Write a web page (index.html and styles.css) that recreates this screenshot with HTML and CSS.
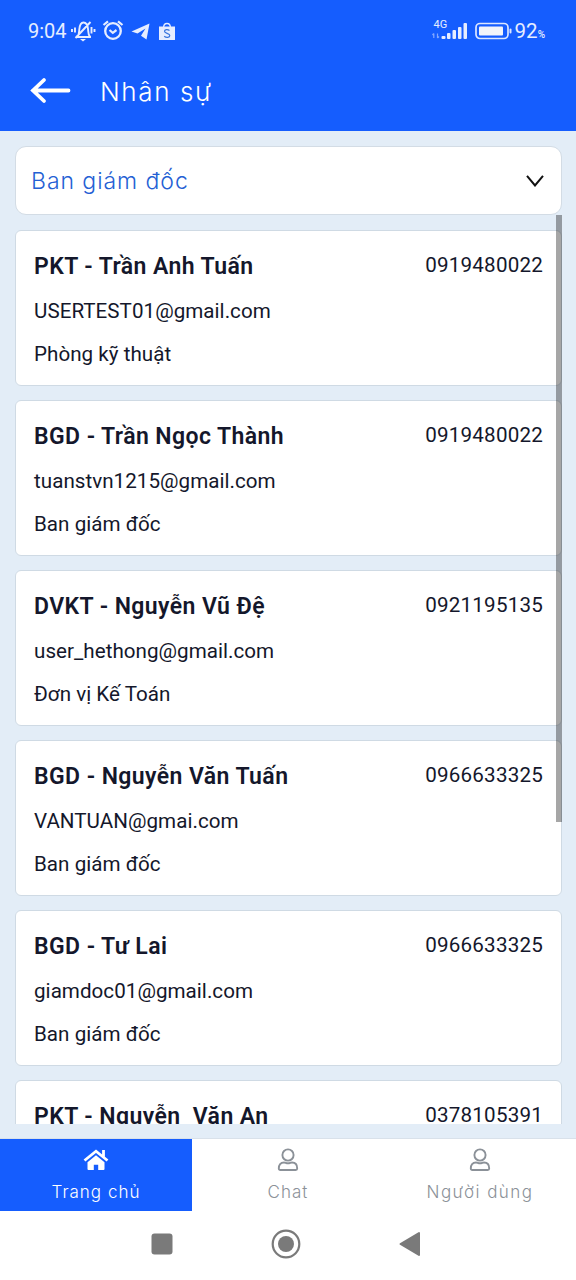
FILE: index.html
```html
<!DOCTYPE html>
<html lang="vi">
<head>
    <meta charset="UTF-8">
    <meta name="viewport" content="width=device-width, initial-scale=1.0">
    <title>Nhân sự</title>
    <link rel="stylesheet" href="styles.css">
</head>
<body>
    <div class="app">
        <header class="header">
            <div class="status">
                <span class="time">9:04</span>
                <svg class="status-left" width="106" height="24" viewBox="0 0 106 24" fill="none" stroke="#e6edff" stroke-width="1.9">
                    <path d="M5 18h15M6.500 17.500c1.800-1.800 1.500-4.500 1.800-7C8.700 6 10 3.500 12.500 3.500s4.200 2.500 4.600 7c.2 2.500 0 5.200 1.800 7M4.500 19 19.500 3M4 8.500v5M1 10v3M20.500 8v6.500M23.500 10v3"/>
                    <path d="M9 20h6l-3 2.500z" fill="#e6edff" stroke="none"/>
                    <circle cx="42" cy="12" r="7.800" stroke-width="2.300"/>
                    <path d="M38.500 11l3.300 2.800 3.700-2.800M32.500 6l4.500-3.700M51.500 6 47 2.300" stroke-width="2.200"/>
                    <path d="M60.500 12.500 78.500 4.500 75.500 20.500 70 16.800 74.500 9.500 66.500 14.500z" fill="#e6edff" stroke="none"/>
                    <path d="M88 7.500h16v13q0 .5-.5.500h-15q-.5 0-.5-.500z" fill="#e6edff" stroke="none"/>
                    <path d="M92.500 9c0-6 7-6 7 0" stroke-width="1.300"/>
                    <path d="M98.500 11.500c-2-1.600-5-1-5 .8 0 2.500 5.300 1.600 5.300 4.200 0 2.200-3.500 2.500-5.600.8" stroke="#3975dd" stroke-width="1.200"/>
                </svg>
                <div class="signal">
                    <span class="net">4G</span>
                    <svg width="36" height="17" viewBox="0 0 36 17" fill="#e6edff">
                        <path d="M1.800 15v-4.500M.5 12l1.300-1.500M5.500 10.500V15M5.500 15l1.500-1.500" fill="none" stroke="#83a8ff" stroke-width="1.200"/>
                        <rect x="9.500" y="13" width="4" height="3" rx="1"/>
                        <rect x="15" y="10" width="3.500" height="6" rx="1"/>
                        <rect x="20.500" y="7" width="3.500" height="9" rx="1"/>
                        <rect x="26" y="4" width="3.500" height="12" rx="1"/>
                        <rect x="31.500" y="0" width="3.500" height="16" rx="1"/>
                    </svg>
                </div>
                <svg class="battery" width="37" height="18" viewBox="0 0 37 18">
                    <rect x="1" y="1.500" width="32" height="15" rx="4" fill="none" stroke="#dbe6ff" stroke-width="1.700"/>
                    <rect x="4" y="4.500" width="24" height="9" rx="1" fill="#f1f4fa"/>
                    <rect x="34.500" y="6.500" width="2" height="5" rx="1" fill="#dbe6ff"/>
                </svg>
                <span class="percent">92<small>%</small></span>
            </div>
            <div class="title-row">
                <svg class="back" width="42" height="28" viewBox="0 0 42 28" fill="none" stroke="#fff" stroke-width="3.800" stroke-linecap="round">
                    <path d="M4 13.500h35.500M15 3 4 13.500 15 24"/>
                </svg>
                <h1 class="title">Nhân sự</h1>
            </div>
        </header>

        <main class="content">
            <div class="select">
                <span class="select-text">Ban giám đốc</span>
                <svg width="18" height="12" viewBox="0 0 18 12" fill="none" stroke="#111" stroke-width="2">
                    <path d="M1 .8 9 10.500 17 .8"/>
                </svg>
            </div>
            <div class="list">
                <div class="card">
                    <div class="card-top"><b class="name">PKT - Trần Anh Tuấn</b><span class="phone">0919480022</span></div>
                    <p class="email">USERTEST01@gmail.com</p>
                    <p class="dept">Phòng kỹ thuật</p>
                </div>
                <div class="card">
                    <div class="card-top"><b class="name">BGD - Trần Ngọc Thành</b><span class="phone">0919480022</span></div>
                    <p class="email">tuanstvn1215@gmail.com</p>
                    <p class="dept">Ban giám đốc</p>
                </div>
                <div class="card">
                    <div class="card-top"><b class="name">DVKT - Nguyễn Vũ Đệ</b><span class="phone">0921195135</span></div>
                    <p class="email">user_hethong@gmail.com</p>
                    <p class="dept">Đơn vị Kế Toán</p>
                </div>
                <div class="card">
                    <div class="card-top"><b class="name">BGD - Nguyễn Văn Tuấn</b><span class="phone">0966633325</span></div>
                    <p class="email">VANTUAN@gmai.com</p>
                    <p class="dept">Ban giám đốc</p>
                </div>
                <div class="card">
                    <div class="card-top"><b class="name">BGD - Tư Lai</b><span class="phone">0966633325</span></div>
                    <p class="email">giamdoc01@gmail.com</p>
                    <p class="dept">Ban giám đốc</p>
                </div>
                <div class="card">
                    <div class="card-top"><b class="name">PKT - Nguyễn&nbsp; Văn An</b><span class="phone">0378105391</span></div>
                </div>
                <div class="scrollbar"></div>
            </div>
        </main>

        <nav class="tabs">
            <div class="tab active">
                <svg width="26" height="22" viewBox="0 0 26 22" fill="#fff">
                    <path d="M13 6.300 4.500 13.300V20q0 1 1 1h5.300v-5.300h4.400V21h5.300q1 0 1-1v-6.700z"/>
                    <path d="M1.500 11.500 13 2.200l11.500 9.300M20.500 1v7" fill="none" stroke="#fff" stroke-width="2.800"/>
                </svg>
                <span class="tab-text">Trang chủ</span>
            </div>
            <div class="tab">
                <svg width="22" height="24" viewBox="0 0 22 24" fill="none" stroke="#8b9198" stroke-width="1.900">
                    <circle cx="11" cy="7" r="5.600"/>
                    <path d="M7 14.500c1.500 0 2 .8 4 .8s2.500-.8 4-.8c3.400 0 5.200 2.500 5.200 6 0 .9-.6 1.500-1.500 1.500H3.300c-.9 0-1.500-.6-1.500-1.500 0-3.500 1.800-6 5.200-6z"/>
                </svg>
                <span class="tab-text">Chat</span>
            </div>
            <div class="tab">
                <svg width="22" height="24" viewBox="0 0 22 24" fill="none" stroke="#8b9198" stroke-width="1.900">
                    <circle cx="11" cy="7" r="5.600"/>
                    <path d="M7 14.500c1.500 0 2 .8 4 .8s2.500-.8 4-.8c3.400 0 5.200 2.500 5.200 6 0 .9-.6 1.500-1.500 1.500H3.300c-.9 0-1.500-.6-1.500-1.500 0-3.500 1.800-6 5.200-6z"/>
                </svg>
                <span class="tab-text wide">Người dùng</span>
            </div>
        </nav>

        <div class="system-nav">
            <svg width="22" height="22" viewBox="0 0 22 22"><rect x=".5" y=".5" width="21" height="21" rx="3" fill="#7a7a7a"/></svg>
            <svg width="30" height="30" viewBox="0 0 30 30"><circle cx="15" cy="15" r="13.300" fill="none" stroke="#7a7a7a" stroke-width="2.200"/><circle cx="15" cy="15" r="8" fill="#7a7a7a"/></svg>
            <svg width="22" height="26" viewBox="0 0 22 26"><path d="M1.500 13 20 2v22z" fill="#7a7a7a" stroke="#7a7a7a" stroke-width="2" stroke-linejoin="round"/></svg>
        </div>
    </div>
</body>
</html>
```
FILE: styles.css
```css
* {
    box-sizing: border-box;
}
body {
    margin: 0;
    font-family: Roboto, sans-serif;
    color: #14172b;
}
.app {
    width: 576px;
    height: 1280px;
    display: flex;
    flex-direction: column;
    overflow: hidden;
    background: #e3edf7;
}
.header {
    height: 131px;
    background: #155dfe;
    color: #fff;
}
.status {
    display: flex;
    align-items: center;
    height: 62px;
    padding: 0 31px 0 28px;
    color: #e6edff;
}
.time {
    width: 43px;
    font-size: 20px;
}
.signal {
    display: flex;
    flex-direction: column;
    position: relative;
    margin-left: auto;
    margin-right: 7px;
}
.net {
    position: absolute;
    top: -3px;
    left: 2px;
    font-size: 11px;
    line-height: 10px;
}
.percent {
    margin-left: 3px;
    font-size: 20.5px;
    font-weight: 400;
}
.percent small {
    font-size: 10px;
    font-weight: 500;
}
.title-row {
    display: flex;
    align-items: center;
    height: 58px;
    padding-left: 29px;
}
.title {
    margin: 0 0 0 29px;
    font: 300 26px Inter, sans-serif;
    letter-spacing: 1.6px;
}
.content {
    flex: 1;
    min-height: 0;
    padding: 15px 14px 0 15px;
    display: flex;
    flex-direction: column;
}
.select {
    display: flex;
    align-items: center;
    justify-content: space-between;
    height: 69px;
    padding: 0 17px 0 15px;
    background: #fff;
    border: 1px solid #d3dce5;
    border-radius: 11px;
    flex-shrink: 0;
}
.select-text {
    font: 300 23px Inter, sans-serif;
    letter-spacing: 0.95px;
    color: #2460d4;
}
.list {
    position: relative;
    height: 909px;
    padding-top: 15px;
    overflow: hidden;
}
.card {
    height: 156px;
    margin-bottom: 14px;
    padding: 19px 18px;
    background: #fff;
    border: 1px solid #cfdae4;
    border-radius: 6px;
}
.card-top {
    display: flex;
    justify-content: space-between;
    height: 34px;
}
.name {
    font-size: 23px;
    font-weight: 600;
    line-height: 34px;
    letter-spacing: 0.42px;
}
.phone {
    font-size: 20.6px;
    line-height: 30px;
    letter-spacing: 0.2px;
}
.email, .dept {
    margin: 0;
    font-size: 20.6px;
    line-height: 24px;
    letter-spacing: 0.03px;
}
.email {
    padding-top: 15px;
}
.dept {
    padding-top: 19px;
}
.scrollbar {
    position: absolute;
    top: 0;
    right: 0;
    width: 6px;
    height: 607px;
    background: rgba(0, 0, 0, 0.35);
}
.tabs {
    display: flex;
    height: 73px;
    background: #fff;
    border-top: 1px solid #d9e1ea;
}
.tab {
    flex: 1;
    display: flex;
    flex-direction: column;
    align-items: center;
    padding-top: 9px;
    color: #8b9198;
}
.tab svg {
    height: 24px;
}
.tab-text {
    margin-top: 9px;
    font: 300 17px/22px Inter, sans-serif;
    letter-spacing: 1px;
}
.wide {
    letter-spacing: 1.45px;
}
.active {
    background: #155dfe;
    color: #fff;
}
.system-nav {
    display: flex;
    align-items: center;
    height: 69px;
    padding-left: 151px;
    background: #fff;
}
.system-nav svg {
    margin-right: 98px;
    margin-bottom: 3px;
}
```
